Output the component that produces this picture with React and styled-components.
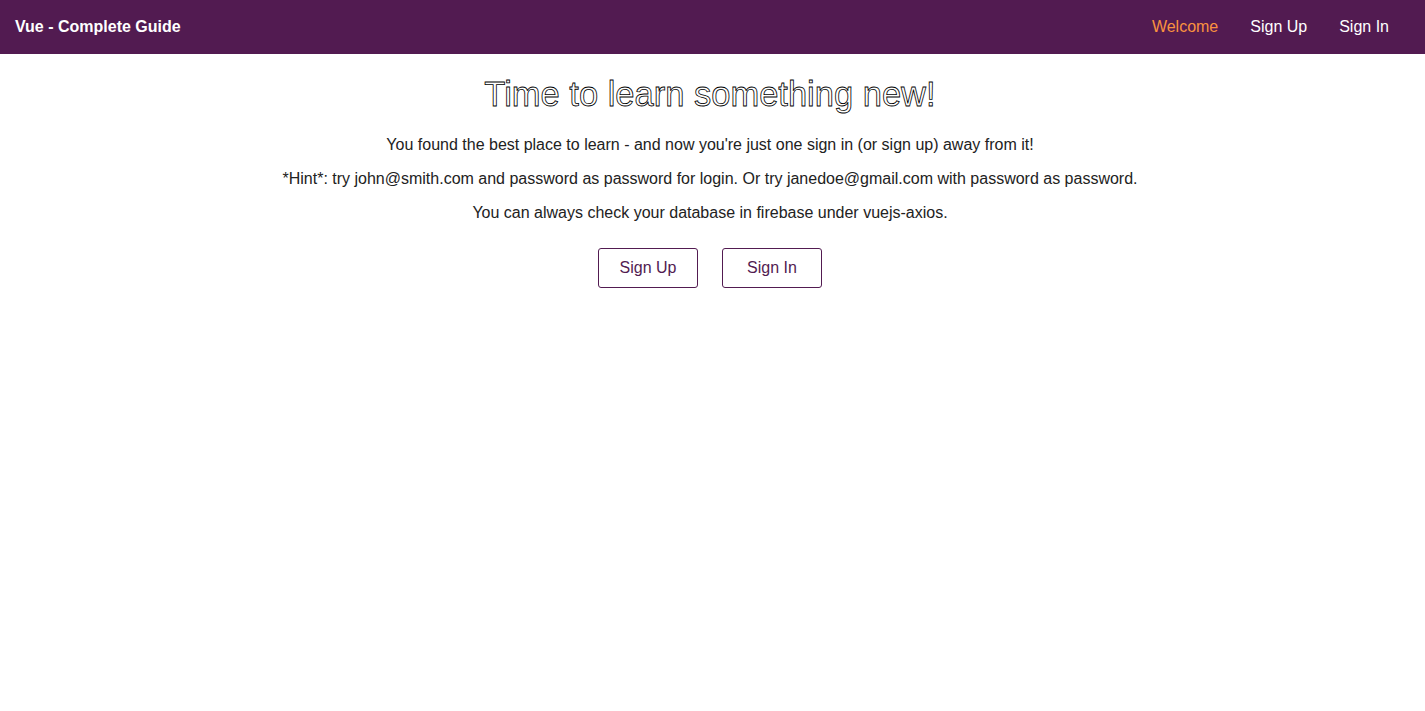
import React from "react";
import styled, { createGlobalStyle } from "styled-components";

const GlobalStyle = createGlobalStyle`
  * { box-sizing: border-box; }
  body {
    margin: 0;
    font-family: "Liberation Sans", Arial, Helvetica, sans-serif;
    background: #fff;
  }
`;

const Header = styled.header`
  height: 54px;
  background-color: #521b51;
  display: flex;
  align-items: center;
  justify-content: space-between;
  padding: 0 20px 0 15px;
`;

const Brand = styled.div`
  color: #fff;
  font-size: 16px;
  font-weight: bold;
`;

const Nav = styled.nav`
  display: flex;
  align-items: center;
`;

const NavLink = styled.a`
  color: ${(p) => (p.$active ? "#fa923f" : "#fff")};
  font-size: 16px;
  padding: 0 16px;
  text-decoration: none;
  cursor: pointer;
`;

const Main = styled.main`
  display: flex;
  flex-direction: column;
  align-items: center;
  text-align: center;
  padding-right: 5px;
`;

const Title = styled.h1`
  margin: 20px 0 22px;
  font-size: 34.5px;
  line-height: 40px;
  font-weight: normal;
  color: #fff;
  -webkit-text-stroke: 0.8px #000;
`;

const Text = styled.p`
  margin: 0 0 16px;
  font-size: 16px;
  line-height: 18px;
  color: #222;
`;

const Actions = styled.div`
  display: flex;
  gap: 24px;
  margin-top: 10px;
`;

const Button = styled.button`
  width: 100px;
  height: 40px;
  background: #fff;
  border: 1px solid #521b51;
  border-radius: 3px;
  color: #521b51;
  font-family: inherit;
  font-size: 16px;
  cursor: pointer;
`;

export default function App() {
  return (
    <>
      <GlobalStyle />
      <Header>
        <Brand>Vue - Complete Guide</Brand>
        <Nav>
          <NavLink $active>Welcome</NavLink>
          <NavLink>Sign Up</NavLink>
          <NavLink>Sign In</NavLink>
        </Nav>
      </Header>
      <Main>
        <Title>Time to learn something new!</Title>
        <Text>
          You found the best place to learn - and now you're just one sign in
          (or sign up) away from it!
        </Text>
        <Text>
          *Hint*: try john@smith.com and password as password for login. Or try
          janedoe@gmail.com with password as password.
        </Text>
        <Text>You can always check your database in firebase under vuejs-axios.</Text>
        <Actions>
          <Button>Sign Up</Button>
          <Button>Sign In</Button>
        </Actions>
      </Main>
    </>
  );
}
